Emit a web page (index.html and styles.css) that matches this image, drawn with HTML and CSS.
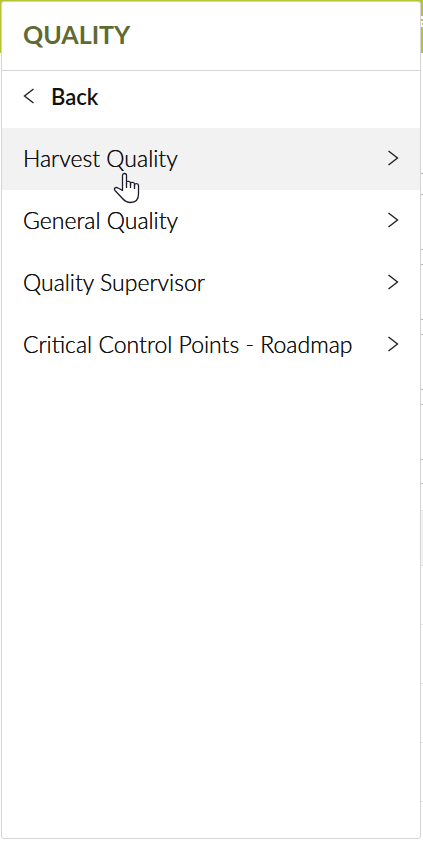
FILE: index.html
```html
<!DOCTYPE html>
<html lang="en">
<head>
    <meta charset="UTF-8">
    <meta name="viewport" content="width=device-width, initial-scale=1.0">
    <title>Quality</title>
    <link rel="stylesheet" href="styles.css">
</head>
<body>
    <div class="page">
        <div class="topbar">
            <svg class="topbar-icon" width="2" height="12" viewBox="0 0 2 12">
                <path d="M0 0h2v3H0zM0 5h2v6H0z" fill="#fff"/>
                <path d="M1 7h1v2H1z" fill="#b5c433"/>
            </svg>
        </div>
        <div class="content">
            <div class="field field-first"></div>
            <div class="field"></div>
            <div class="field"></div>
            <div class="field"></div>
            <div class="field"></div>
            <div class="grid-top"></div>
            <div class="row row-head"></div>
            <div class="row"></div>
            <div class="row"></div>
            <div class="row"></div>
            <div class="row"></div>
        </div>
    </div>

    <nav class="menu">
        <h1>QUALITY</h1>
        <button class="back">
            <svg width="12" height="16" viewBox="0 0 12 16"><path d="M10.5 1L1.5 8l9 7"/></svg>
            Back
        </button>
        <ul>
            <li>
                <button class="item active">
                    Harvest Quality
                    <svg width="12" height="16" viewBox="0 0 12 16"><path d="M1.5 1l9 7-9 7"/></svg>
                </button>
            </li>
            <li>
                <button class="item">
                    General Quality
                    <svg width="12" height="16" viewBox="0 0 12 16"><path d="M1.5 1l9 7-9 7"/></svg>
                </button>
            </li>
            <li>
                <button class="item">
                    Quality Supervisor
                    <svg width="12" height="16" viewBox="0 0 12 16"><path d="M1.5 1l9 7-9 7"/></svg>
                </button>
            </li>
            <li>
                <button class="item">
                    Critical Control Points - Roadmap
                    <svg width="12" height="16" viewBox="0 0 12 16"><path d="M1.5 1l9 7-9 7"/></svg>
                </button>
            </li>
        </ul>
    </nav>

    <!-- hand pointer -->
    <svg class="pointer" width="28" height="34" viewBox="0 0 28 34">
        <path d="M10.5 19.5V4.5C10.5 1.8 14.5 1.8 14.5 4.5V13V11.5C14.5 9.8 18.5 9.8 18.5 12V14V12.5C18.5 10.8 22.5 10.8 22.5 13V15V14C22.5 12.2 26.5 12.2 26.5 14.5V23C26.5 29 23.5 31.5 18.5 31.5C14.5 31.5 12.5 30 10 27L3 19.5C1.2 17 4 15.8 6 17Z"/>
        <path d="M14.5 12v5M18.5 12v5M22.5 14v4"/>
    </svg>
</body>
</html>
```

FILE: styles.css
```css
* {
    box-sizing: border-box;
}
body {
    display: grid;
    height: 100vh;
    margin: 0;
    overflow: hidden;
    background-color: white;
    color: #111;
    font-family: Lato, sans-serif;
}

/* page under the menu */
.page {
    grid-area: 1 / 1;
    min-width: 0;
}
.topbar {
    display: flex;
    justify-content: flex-end;
    height: 53px;
    padding-top: 16px;
    background-color: #b5c433;
}
.content {
    padding-left: 20px;
}
.field {
    height: 56px;
    margin-bottom: 14px;
    border-top: 1px solid #b5b5b5;
    border-bottom: 1px solid #b5b5b5;
}
.field-first {
    height: 121px;
    margin-bottom: 20px;
    border-top: none;
}
.grid-top {
    height: 27px;
    margin-top: 23px;
    border-top: 1px solid #b5b5b5;
}
.row {
    height: 59px;
    border-bottom: 1px solid #e4e4e4;
}
.row-head {
    height: 56px;
    border-top: 1px solid #e4e4e4;
    background-color: #f2f2f2;
}

.menu {
    grid-area: 1 / 1;
    margin: 1px 2px 2px 1px;
    border: 1px solid #d4d4d4;
    border-radius: 3px;
    background-color: white;
}
h1 {
    height: 69px;
    margin: 0;
    padding: 0 21px;
    border-bottom: 1px solid #d4d4d4;
    color: #5f6b35;
    font-size: 25px;
    font-weight: bold;
    line-height: 64px;
}
ul {
    margin: 0;
    padding: 0;
    list-style: none;
}
button {
    display: flex;
    align-items: center;
    width: 100%;
    border: none;
    background-color: transparent;
    color: inherit;
    font-family: inherit;
    font-size: 23px;
    font-weight: 300;
    text-align: left;
    cursor: pointer;
}
button svg {
    fill: none;
    stroke: #222;
    stroke-width: 1.4;
}
.back {
    gap: 16px;
    height: 57px;
    padding: 0 21px 7px;
    font-size: 22px;
    font-weight: 600;
}
.item {
    justify-content: space-between;
    height: 62px;
    padding: 0 21px 3px;
    text-shadow: 0 0 0 #111;
}
.active,
.item:hover {
    background-color: #f2f2f2;
}

.pointer {
    position: absolute;
    top: 171px;
    left: 112px;
    fill: white;
    stroke: #1c1c2e;
    stroke-width: 1.3;
    stroke-linejoin: round;
    pointer-events: none;
}
```
